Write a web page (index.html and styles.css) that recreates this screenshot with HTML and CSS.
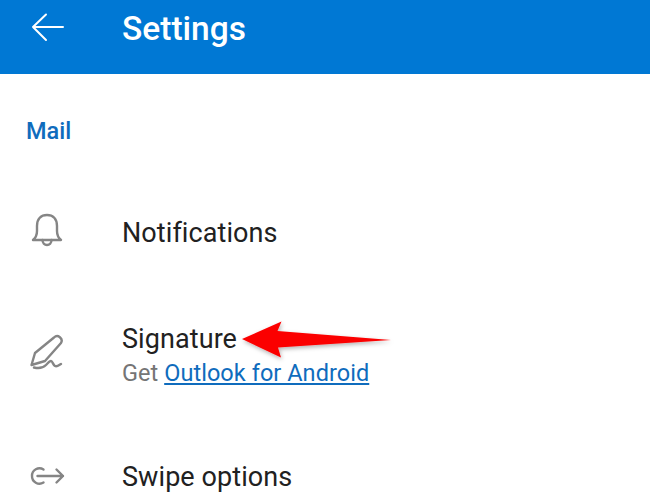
FILE: index.html
```html
<!DOCTYPE html>
<html lang="en">
<head>
  <meta charset="UTF-8" />
  <title>Settings</title>
  <link rel="stylesheet" href="styles.css">
</head>
<body>
  <header class="topbar">
    <svg class="back" width="34" height="30" viewBox="0 0 34 30" fill="none" stroke="#fff" stroke-width="2" stroke-linecap="round" stroke-linejoin="round">
      <path d="M2 14h30M15 1.500 2 14l13 13"/>
    </svg>
    <h1>Settings</h1>
  </header>

  <main class="list">
    <h2>Mail</h2>

    <div class="row row-notifications">
      <svg class="icon" width="36" height="36" viewBox="0 0 36 36" fill="none" stroke="#858585" stroke-width="2.400" stroke-linecap="round" stroke-linejoin="round">
        <path d="M4 28c3-2.500 4-4.500 4-9v-5C8 7 12 3 18 3s10 4 10 11v5c0 4.500 1 6.500 4 9z"/>
        <path d="M13.500 28c0 3 2 5 4.500 5s4.500-2 4.500-5"/>
      </svg>
      <div class="title">Notifications</div>
    </div>

    <div class="row row-signature">
      <svg class="icon" width="36" height="36" viewBox="0 0 36 36" fill="none" stroke="#858585" stroke-width="2.400" stroke-linecap="round" stroke-linejoin="round">
        <path d="M2.500 31 6 19 25 3.500a4.500 4.500 0 0 1 7 5.500L16 27z"/>
        <path d="M5 33.500c4 1 9 .5 12-2.500 2-2 3.500-4 5-4s2 4 4 5 3.500-.5 6-2"/>
      </svg>
      <div class="text">
        <div class="title">Signature</div>
        <div class="sub">Get <a href="#">Outlook for Android</a></div>
      </div>
    </div>

    <div class="row row-swipe">
      <svg class="icon" width="36" height="24" viewBox="0 0 36 24" fill="none" stroke="#858585" stroke-width="2.400" stroke-linecap="round" stroke-linejoin="round">
        <path d="M14.500 5.500A7.500 7.500 0 0 0 3 12a7.500 7.500 0 0 0 11.500 6.500M8.500 12H34M27.500 5.500 34 12l-6.500 6.500"/>
      </svg>
      <div class="title">Swipe options</div>
    </div>
  </main>

  <!-- red callout drawn over the screenshot -->
  <svg class="callout" width="650" height="495" viewBox="0 0 650 495">
    <defs>
      <filter id="soft" x="-10%" y="-30%" width="120%" height="170%">
        <feDropShadow dx="1" dy="2" stdDeviation="2" flood-color="#000" flood-opacity=".3"/>
      </filter>
    </defs>
    <path d="M242 339 281.500 321.500 277.500 331 391 340 278 347.500 281 357.500z" fill="#fb0000" filter="url(#soft)"/>
  </svg>
</body>
</html>
```

FILE: styles.css
```css
* {
  box-sizing: border-box;
  margin: 0;
  padding: 0;
}
html, body {
  height: 495px;
  overflow: hidden;
}
body {
  font-family: 'Roboto', sans-serif;
  background: #fff;
  color: #212121;
}
.topbar {
  height: 74px;
  background: #0078d4;
  display: flex;
  align-items: flex-start;
  padding: 13px 0 0 31px;
  color: #fff;
}
.back {
  flex: none;
}
.topbar h1 {
  font-size: 33.500px;
  font-weight: 500;
  line-height: 32px;
  margin-left: 57px;
}
.list {
  padding-top: 45px;
}
.list h2 {
  font-size: 23.500px;
  font-weight: 500;
  line-height: 24px;
  color: #0f6cbd;
  padding-left: 26px;
}
.row {
  display: flex;
  align-items: center;
  padding-left: 29px;
}
.row-notifications {
  margin-top: 69px;
}
.row-signature {
  margin-top: 70px;
}
.row-swipe {
  margin-top: 75px;
}
.row-notifications .icon {
  margin-bottom: 5px;
}
.row-signature .icon {
  margin-bottom: 6px;
}
.row-swipe .icon {
  margin-bottom: 2px;
}
.icon {
  flex: none;
  margin-right: 57px;
}
.title {
  font-size: 27px;
  line-height: 32px;
  letter-spacing: .08px;
}
.sub {
  font-size: 23.500px;
  line-height: 26px;
  color: #757575;
  margin-top: 5px;
  letter-spacing: .05px;
}
.sub a {
  color: #0f6cbd;
}
.callout {
  position: absolute;
  left: 0;
  top: 0;
}
```
